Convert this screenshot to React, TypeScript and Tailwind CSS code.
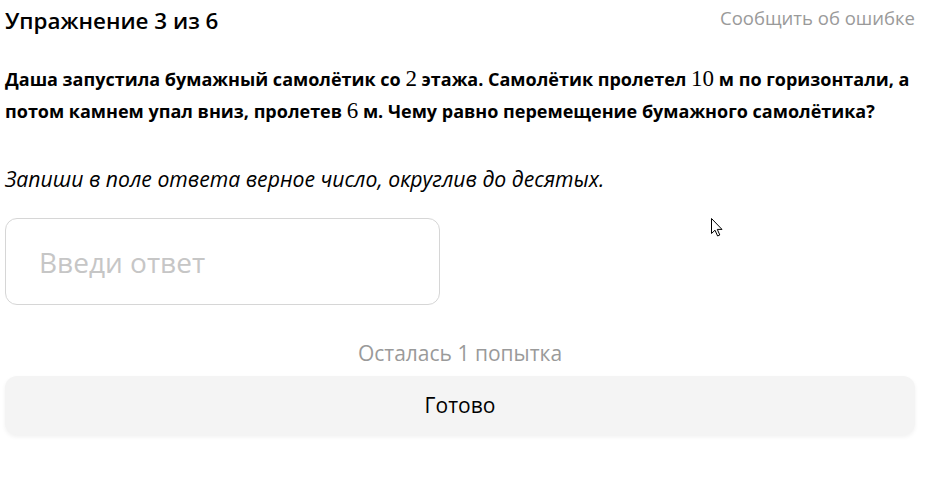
export default function App() {
  const math = "font-['Liberation_Serif',serif] font-normal text-[23px] leading-none";
  return (
    <div className="relative min-h-[484px] w-[934px] bg-white font-['Open_Sans',sans-serif] text-black">
      <div className="w-[910px] ml-[5px] pt-[5px]">
        <div className="flex items-start justify-between">
          <h1 className="text-[22.4px] font-semibold leading-[32px]">Упражнение 3 из 6</h1>
          <button className="text-[18.5px] leading-[26px] text-[#9a9a9a]">Сообщить об ошибке</button>
        </div>

        <p className="mt-[26px] text-[18px] font-bold leading-[32px]">
          Даша запустила бумажный самолётик со <span className={math}>2</span> этажа. Самолётик пролетел{' '}
          <span className={math}>10</span> м по горизонтали, а потом камнем упал вниз, пролетев{' '}
          <span className={math}>6</span> м. Чему равно перемещение бумажного самолётика?
        </p>

        <p className="mt-[38px] text-[21.2px] italic leading-[28px]">
          Запиши в поле ответа верное число, округлив до десятых.
        </p>

        <div className="mt-[25px] flex h-[87px] w-[435px] items-center rounded-[12px] border border-[#d6d6d6] px-[33px]">
          <input
            className="w-full bg-transparent text-[28px] outline-none placeholder:text-[#c6c6c6]"
            placeholder="Введи ответ"
          />
        </div>

        <p className="mt-[34px] text-center text-[21px] leading-[28px] text-[#9a9a9a]">Осталась 1 попытка</p>

        <button className="mt-[9px] flex h-[59px] w-full items-center justify-center rounded-[12px] bg-[#f4f4f4] text-[21px] shadow-[0_2px_4px_rgba(0,0,0,0.06)]">
          Готово
        </button>
      </div>

      <svg className="absolute left-[711px] top-[218px]" width="12" height="19" viewBox="0 0 12 19">
        <path d="M0.5 0.5 L0.5 15.5 L4 12.2 L6.6 18 L8.8 17 L6.3 11.4 L11 11.4 Z" fill="white" stroke="black" strokeWidth="1" />
      </svg>
    </div>
  );
}
